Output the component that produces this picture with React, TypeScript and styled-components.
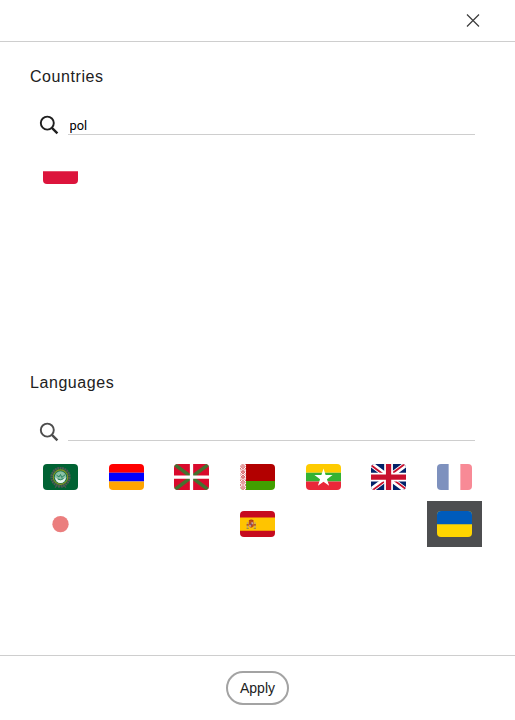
import React from 'react';
import styled, { createGlobalStyle } from 'styled-components';

const GlobalStyle = createGlobalStyle`
  *, *::before, *::after { box-sizing: border-box; }
  body { margin: 0; background: #fff; color: #212121; font-family: "Liberation Sans", Arial, sans-serif; }
`;

const Dialog = styled.div`
  display: flex;
  flex-direction: column;
  height: 720px;
  overflow: hidden;
`;

const Header = styled.header`
  display: flex;
  justify-content: flex-end;
  align-items: center;
  height: 42px;
  padding: 0 35px 1px 0;
  border-bottom: 1px solid #cecece;
`;

const CloseButton = styled.button`
  display: flex;
  padding: 0;
  border: 0;
  background: none;
`;

const Content = styled.main`
  flex: 1;
  min-height: 0;
`;

const Section = styled.section`
  height: 306px;
  padding: 25px 33px 0 30px;
`;

const Title = styled.h2`
  margin: 0;
  font-size: 16px;
  font-weight: 400;
  line-height: 20px;
  letter-spacing: 0.57px;
`;

const SearchRow = styled.label<{ $muted?: boolean }>`
  display: flex;
  align-items: flex-end;
  gap: 9px;
  height: 24px;
  margin: 24px 7px 0 9px;
  color: ${({ $muted }) => ($muted ? '#4d4d4d' : '#1f1f1f')};
  > svg {
    margin-bottom: ${({ $muted }) => ($muted ? '-1px' : '0')};
  }
`;

const SearchInput = styled.input`
  flex: 1;
  min-width: 0;
  height: 20px;
  padding: 3px 1.5px 1px;
  border: 0;
  border-bottom: 1px solid #cecece;
  outline: 0;
  background: transparent;
  color: #000;
  font: 12.8px Roboto, sans-serif;
`;

const FlagViewport = styled.div<{ $scrolled?: boolean }>`
  height: ${({ $scrolled }) => ($scrolled ? '150px' : '170px')};
  margin: ${({ $scrolled }) => ($scrolled ? '36px' : '13px')} 0 0 3px;
  overflow: hidden;
`;

const FlagGrid = styled.div<{ $lift?: number }>`
  display: grid;
  grid-template-columns: repeat(7, 55px);
  grid-auto-rows: 46.5px;
  justify-content: space-between;
  margin-top: ${({ $lift = 0 }) => -$lift}px;
`;

const FlagCell = styled.div<{ $selected?: boolean; $fade?: number }>`
  display: flex;
  align-items: center;
  justify-content: center;
  background: ${({ $selected }) => ($selected ? '#4d4e50' : 'transparent')};
  svg {
    display: block;
    border-radius: 4px;
    opacity: ${({ $fade = 1 }) => $fade};
  }
`;

const Footer = styled.footer`
  display: flex;
  justify-content: center;
  height: 65px;
  padding-top: 15px;
  border-top: 1px solid #cecece;
`;

const ApplyButton = styled.button`
  width: 63px;
  height: 34px;
  padding: 0;
  border: 2px solid #a3a3a3;
  border-radius: 17px;
  background: #fff;
  color: #212121;
  font: 14px "Liberation Sans", Arial, sans-serif;
`;

const SearchIcon = () => (
  <svg width="20" height="20" viewBox="0 0 20 20" fill="none" stroke="currentColor">
    <circle cx="8.3" cy="8.1" r="6.5" strokeWidth="1.9" />
    <path d="M12.9 12.8 L18.4 18.4" strokeWidth="2.4" />
  </svg>
);

const Flag = ({ children }: { children: React.ReactNode }) => (
  <svg width="35" height="26.25" viewBox="0 0 640 480">{children}</svg>
);

const flags = {
  poland: (
    <><path fill="#fff" d="M0 0h640v240H0z" /><path fill="#dc143c" d="M0 240h640v240H0z" /></>
  ),
  arabic: (
    <>
      <path fill="#006233" d="M0 0h640v480H0z" />
      <circle cx="320" cy="240" r="163" fill="none" stroke="#4e5a54" strokeWidth="46" strokeDasharray="34 10" />
      <path d="M260 375l-38 60M300 385l-12 50M340 385l12 50M380 375l38 60" stroke="#4e5a54" strokeWidth="22" />
      <circle cx="320" cy="240" r="132" fill="#146d49" stroke="#85951f" strokeWidth="20" />
      <circle cx="320" cy="240" r="106" fill="#8ac1a5" />
      <path d="M222 240q98 110 196 0q-15 106-98 106t-98-106" fill="#e5f2ec" />
      <path d="M248 205l44 32 28-45 22 54 62-50M270 275q50 30 105-10" fill="none" stroke="#26805b" strokeWidth="18" />
    </>
  ),
  armenia: (
    <><path fill="#f00" d="M0 0h640v160H0z" /><path fill="#00f" d="M0 160h640v160H0z" /><path fill="orange" d="M0 320h640v160H0z" /></>
  ),
  basque: (
    <>
      <path fill="#d90a2c" d="M0 0h640v480H0z" />
      <path d="M0 0l640 480M640 0L0 480" stroke="#45702f" strokeWidth="64" />
      <path d="M320 0v480M0 240h640" stroke="#fff" strokeWidth="60" />
    </>
  ),
  belarus: (
    <>
      <path fill="#b20000" d="M0 0h640v310H0z" />
      <path fill="#429f00" d="M0 310h640v170H0z" />
      <path fill="#fff" d="M0 0h110v480H0z" />
      {[0, 96, 192, 288, 384].map((y) => (
        <g key={y} transform={`translate(0 ${y})`} fill="none" stroke="#cb3438" strokeWidth="14">
          <path d="M55 8l38 40-38 40-38-40zM55 32l15 16-15 16-15-16zM0 22l22-22M0 74l22 22M88 0l22 22M88 96l22-22" />
        </g>
      ))}
    </>
  ),
  myanmar: (
    <>
      <path fill="#fecb00" d="M0 0h640v160H0z" />
      <path fill="#34b233" d="M0 160h640v160H0z" />
      <path fill="#ea2839" d="M0 320h640v160H0z" />
      <path fill="#fff" d="M320 82l39 120h127l-103 75 40 121-103-75-103 75 40-121-103-75h127z" />
    </>
  ),
  britain: (
    <>
      <path fill="#012169" d="M0 0h640v480H0z" />
      <path fill="#fff" d="m75 0 244 181L562 0h78v62L400 241l240 178v61h-80L320 301 81 480H0v-60l239-178L0 64V0z" />
      <path fill="#c8102e" d="m424 281 216 159v40L369 281zm-184 20 6 35L54 480H0zM640 0v3L391 191l2-44L590 0zM0 0l239 176h-60L0 42z" />
      <path fill="#fff" d="M241 0v480h160V0zM0 160v160h640V160z" />
      <path fill="#c8102e" d="M0 193v96h640v-96zM273 0v480h96V0z" />
    </>
  ),
  france: (
    <><path fill="#fff" d="M0 0h640v480H0z" /><path fill="#00267f" d="M0 0h213v480H0z" /><path fill="#f31830" d="M427 0h213v480H427z" /></>
  ),
  japan: (
    <><path fill="#fff" d="M0 0h640v480H0z" /><circle cx="320" cy="240" r="149" fill="#d90000" /></>
  ),
  spain: (
    <>
      <path fill="#c60b1e" d="M0 0h640v480H0z" />
      <path fill="#ffc400" d="M0 120h640v240H0z" />
      <path fill="#b94c22" d="M160 190q45-32 90 0v90q-45 52-90 0z" />
      <path d="M134 205v105M276 205v105" stroke="#b8a578" strokeWidth="20" />
      <path d="M165 183q40-34 80 0M120 255h40M250 255h40" fill="none" stroke="#ad3a19" strokeWidth="22" />
      <path fill="#c8a2a4" d="M207 205h35v38h-35zM168 250h35v36h-35z" />
      <ellipse cx="205" cy="248" rx="15" ry="20" fill="#73506d" />
      <path d="M120 318h42M250 318h42" stroke="#7d7958" strokeWidth="15" />
    </>
  ),
  ukraine: (
    <><path fill="#ffd500" d="M0 0h640v480H0z" /><path fill="#005bbb" d="M0 0h640v240H0z" /></>
  ),
};

type FlagName = keyof typeof flags;
interface Language { name: FlagName | null; fade?: number; selected?: boolean; }

const languages: Language[] = [
  { name: 'arabic' }, { name: 'armenia' }, { name: 'basque' }, { name: 'belarus' },
  { name: 'myanmar' }, { name: 'britain' }, { name: 'france', fade: 0.5 },
  { name: 'japan', fade: 0.5 }, { name: null }, { name: null }, { name: 'spain' },
  { name: null }, { name: null }, { name: 'ukraine', selected: true },
];

export default function App() {
  return (
    <>
      <GlobalStyle />
      <Dialog>
        <Header>
          <CloseButton aria-label="Close">
            <svg width="14" height="14" viewBox="0 0 14 14" fill="none" stroke="#3c3c3c" strokeWidth="1.2">
              <path d="M1 1.5l12 12M13 1.5L1 13.5" />
            </svg>
          </CloseButton>
        </Header>
        <Content>
          <Section>
            <Title>Countries</Title>
            <SearchRow><SearchIcon /><SearchInput aria-label="Search countries" defaultValue="pol" /></SearchRow>
            <FlagViewport $scrolled>
              <FlagGrid $lift={23.5}><FlagCell><Flag>{flags.poland}</Flag></FlagCell></FlagGrid>
            </FlagViewport>
          </Section>
          <Section>
            <Title>Languages</Title>
            <SearchRow $muted><SearchIcon /><SearchInput aria-label="Search languages" /></SearchRow>
            <FlagViewport>
              <FlagGrid>
                {languages.map((language, i) => (
                  <FlagCell key={i} $fade={language.fade} $selected={language.selected}>
                    {language.name && <Flag>{flags[language.name]}</Flag>}
                  </FlagCell>
                ))}
              </FlagGrid>
            </FlagViewport>
          </Section>
        </Content>
        <Footer><ApplyButton>Apply</ApplyButton></Footer>
      </Dialog>
    </>
  );
}
